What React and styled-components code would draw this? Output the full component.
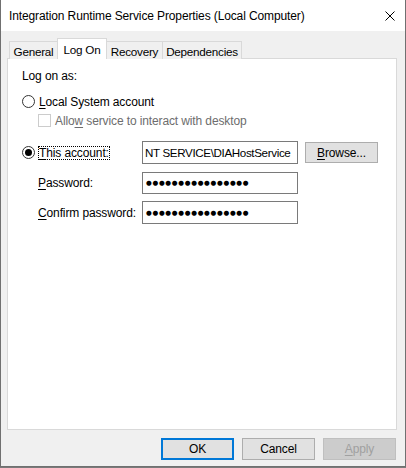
import React from "react";
import styled, { createGlobalStyle } from "styled-components";

const Global = createGlobalStyle`
  html, body { margin: 0; padding: 0; background: #7a7a7a; }
  body {
    font-family: "Liberation Sans", Arial, sans-serif;
    font-size: 12px;
    letter-spacing: -0.12px;
    color: #000;
  }
  * { box-sizing: border-box; }
`;

const Window = styled.div`
  width: 406px;
  height: 467px;
  display: flex;
  flex-direction: column;
  background: #f0f0f0;
  border: 1px solid #707070;
  border-top: none;
`;

const TitleBar = styled.div`
  height: 31px;
  flex: none;
  background: #fff;
  display: flex;
  align-items: center;
  justify-content: space-between;
  padding: 0 10px 0 8px;
`;

const Close = styled.div`
  width: 10px;
  height: 10px;
  display: flex;
`;

const Body = styled.div`
  flex: 1;
  display: flex;
  flex-direction: column;
  padding: 7px 8px 0 6px;
`;

const TabRow = styled.div`
  display: flex;
  align-items: flex-end;
  margin-left: 2px;
  height: 21px;
  position: relative;
  z-index: 1;
  margin-bottom: -1px;
`;

const Tab = styled.div`
  width: ${(p) => p.$w}px;
  height: ${(p) => (p.$active ? 21 : 18)}px;
  display: flex;
  align-items: center;
  justify-content: center;
  padding-top: ${(p) => (p.$active ? 0 : 2)}px;
  background: ${(p) => (p.$active ? "#fff" : "#f0f0f0")};
  border-top: 1px solid #d9d9d9;
  border-left: ${(p) => (p.$noLeft ? "none" : "1px solid #d9d9d9")};
  border-right: ${(p) => (p.$right ? "1px solid #d9d9d9" : "none")};
  font-size: 11.7px;
  letter-spacing: -0.25px;
  white-space: nowrap;
`;

const Panel = styled.div`
  height: 372px;
  flex: none;
  background: #fff;
  border: 1px solid #d9d9d9;
  padding: 10px 0 0 14px;
  display: flex;
  flex-direction: column;
`;

const Heading = styled.div`
  height: 15px;
  line-height: 15px;
`;

const OptionRow = styled.div`
  display: flex;
  align-items: center;
  gap: 4px;
  height: 15px;
  margin-top: ${(p) => p.$mt || 0}px;
  margin-left: ${(p) => p.$ml || 0}px;
  color: ${(p) => (p.$disabled ? "#6d6d6d" : "#000")};
  white-space: nowrap;
`;

const Radio = styled.span`
  width: 13px;
  height: 13px;
  flex: none;
  border-radius: 50%;
  border: 1px solid #333;
  background: #fff;
  display: flex;
  align-items: center;
  justify-content: center;
  &::after {
    content: "";
    display: ${(p) => (p.$checked ? "block" : "none")};
    width: 7px;
    height: 7px;
    border-radius: 50%;
    background: #000;
  }
`;

const Check = styled.span`
  width: 13px;
  height: 13px;
  flex: none;
  border: 1px solid #cccccc;
  background: #fff;
`;

const Focus = styled.span`
  outline: 1px dotted #000;
  line-height: 12px;
`;

const U = styled.span`
  text-decoration: underline;
  text-underline-offset: 2px;
`;

const AccountGrid = styled.div`
  display: grid;
  grid-template-columns: 113px 156px 73px;
  grid-auto-rows: 23px;
  column-gap: 7px;
  row-gap: 7px;
  margin-top: 13px;
  align-items: center;
`;

const Label = styled.div`
  padding-left: ${(p) => p.$indent || 0}px;
  display: flex;
  align-items: center;
  gap: 4px;
  white-space: nowrap;
`;

const Field = styled.div`
  height: ${(p) => p.$h || 23}px;
  border: 1px solid #7a7a7a;
  background: #fff;
  padding: 0 0 0 2px;
  display: flex;
  align-items: center;
  white-space: nowrap;
  overflow: hidden;
  font-size: 11.6px;
  letter-spacing: -0.35px;
`;

const Dots = styled.span`
  font-family: "DejaVu Sans", sans-serif;
  font-size: 6.6px;
  letter-spacing: 0.7px;
  padding-left: 1px;
`;

const Button = styled.div`
  width: 73px;
  height: ${(p) => p.$h || 22}px;
  display: flex;
  align-items: center;
  justify-content: center;
  background: ${(p) => (p.$disabled ? "#cccccc" : "#e1e1e1")};
  color: ${(p) => (p.$disabled ? "#a0a0a0" : "#000")};
  border: ${(p) =>
    p.$default ? "2px solid #0078d7" : p.$disabled ? "1px solid #bfbfbf" : "1px solid #adadad"};
`;

const Footer = styled.div`
  display: flex;
  justify-content: flex-end;
  gap: 8px;
  padding: 8px 1px 0 0;
`;

const dots = "●".repeat(16);

export default function App() {
  return (
    <>
      <Global />
      <Window>
        <TitleBar>
          <span>Integration Runtime Service Properties (Local Computer)</span>
          <Close>
            <svg width="10" height="10" viewBox="0 0 10 10">
              <path d="M0.5 0.5 L9.5 9.5 M9.5 0.5 L0.5 9.5" stroke="#000" strokeWidth="1" />
            </svg>
          </Close>
        </TitleBar>
        <Body>
          <TabRow>
            <Tab $w={48}>General</Tab>
            <Tab $w={50} $active $right>Log On</Tab>
            <Tab $w={55} $noLeft>Recovery</Tab>
            <Tab $w={80} $right>Dependencies</Tab>
          </TabRow>
          <Panel>
            <Heading>Log on as:</Heading>
            <OptionRow $mt={10}>
              <Radio />
              <span><U>L</U>ocal System account</span>
            </OptionRow>
            <OptionRow $mt={4} $ml={16} $disabled>
              <Check />
              <span>Allo<U>w</U> service to interact with desktop</span>
            </OptionRow>
            <AccountGrid>
              <Label>
                <Radio $checked />
                <Focus><U>T</U>his account:</Focus>
              </Label>
              <Field>NT SERVICE\DIAHostService</Field>
              <Button $h={21}><span><U>B</U>rowse...</span></Button>
              <Label $indent={16}><span><U>P</U>assword:</span></Label>
              <Field $h={22}><Dots>{dots}</Dots></Field>
              <span />
              <Label $indent={16}><span><U>C</U>onfirm password:</span></Label>
              <Field><Dots>{dots}</Dots></Field>
              <span />
            </AccountGrid>
          </Panel>
          <Footer>
            <Button $default>OK</Button>
            <Button>Cancel</Button>
            <Button $disabled><span><U>A</U>pply</span></Button>
          </Footer>
        </Body>
      </Window>
    </>
  );
}
